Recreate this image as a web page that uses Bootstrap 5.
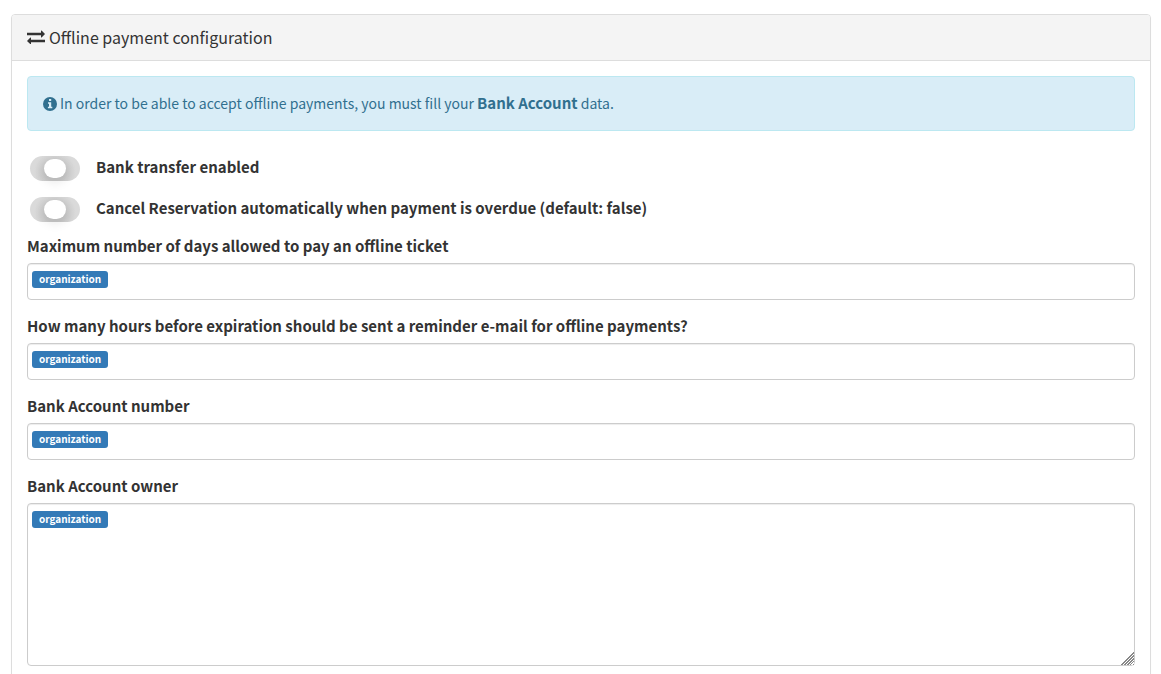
<!DOCTYPE html>
<html lang="en">
<head>
<meta charset="utf-8">
<meta name="viewport" content="width=device-width, initial-scale=1">
<title>Offline payment configuration</title>
<link href="https://cdn.jsdelivr.net/npm/bootstrap@5.3.0/dist/css/bootstrap.min.css" rel="stylesheet">
<style>
body{font-family:"Noto Sans CJK SC","Source Sans Pro",sans-serif;font-size:14px;line-height:22px;color:#333;background:#fff}
.page{padding:14px 10px 20px 11px}
.panel{border:1px solid #ddd;border-radius:4px;box-shadow:0 1px 1px rgba(0,0,0,.05)}
.panel-head{background:#f4f4f4;border-bottom:1px solid #ddd;border-radius:3px 3px 0 0;padding:11px 15px 12px}
.panel-head h1{font-size:16px;line-height:22px;font-weight:400;gap:4px}
.panel-main{padding:15px}
.notice{background:#d9edf7;border:1px solid #bce8f1;border-radius:4px;color:#31708f;padding:15px;line-height:23px;margin-bottom:17px;gap:3px}
.notice strong,.field-label,.switch-row label{font-size:15px;font-weight:700}
.notice strong{line-height:1}
.field-label,.switch-row label{line-height:22px}
.switches{margin-bottom:5px}
.switch-row{height:41px;gap:16px;padding-left:3px}
.switch-row label{padding-bottom:4px}
.toggle{width:50px;height:25px;appearance:none;border-radius:13px;margin:0;background:radial-gradient(circle at 25px 16px,#c8c8c8 10px,#dadada 21px);position:relative;flex:none}
.toggle::before{content:"";position:absolute;left:14px;top:3px;width:22px;height:19px;border-radius:11px;background:#fff;box-shadow:0 4px 11px rgba(0,0,0,.1)}
.field{margin-bottom:15px}
.field-label{display:block;margin-bottom:6px}
.box{position:relative}
.box .form-control{border:1px solid #ccc;border-radius:4px;font-size:14px;box-shadow:inset 0 1px 1px rgba(0,0,0,.075);padding:6px 12px 6px 88px;height:37px;display:block}
.box textarea.form-control{height:163px;resize:both}
textarea::-webkit-resizer{background:linear-gradient(135deg,#fff 55%,transparent 55%),repeating-linear-gradient(135deg,#888 0 1px,#fff 1px 2px)}
.tag{position:absolute;left:5px;top:8px;height:17px;line-height:16px;padding:0 7px;border-radius:3px;background:#337ab7;color:#fff;font-size:10px;font-weight:700}
</style>
</head>
<body>
<main class="page">
<section class="panel">
<header class="panel-head">
<h1 class="d-flex align-items-center m-0"><svg width="18" height="14" viewBox="0 0 18 14" fill="#333" aria-hidden="true"><path d="M0 2.8h14V1Q14 .2 14.6.6L18 4l-3.4 3.4Q14 7.8 14 7V5.3H0zM18 12.2H4V14q0 .6-.6.2L0 11l3.4-3.4Q4 7.2 4 8V9.7h14z"/></svg><span>Offline payment configuration</span></h1>
</header>
<form class="panel-main">
<div class="notice d-flex align-items-center" role="status"><svg width="14" height="14" viewBox="0 0 14 14" aria-hidden="true"><circle cx="7" cy="7" r="7" fill="#31708f"/><path d="M6 2h2.2v2H6zM5 5.2h3.2v4.6h1.1V11.3H4.9V9.8H6V6.7H5z" fill="#d9edf7"/></svg><span>In order to be able to accept offline payments, you must fill your <strong>Bank Account</strong> data.</span></div>
<div class="switches">
<div class="switch-row d-flex align-items-center"><input class="toggle" type="checkbox" role="switch" id="transfer"><label for="transfer">Bank transfer enabled</label></div>
<div class="switch-row d-flex align-items-center"><input class="toggle" type="checkbox" role="switch" id="cancel"><label for="cancel">Cancel Reservation automatically when payment is overdue (default: false)</label></div>
</div>
<div class="field"><label class="field-label" for="days">Maximum number of days allowed to pay an offline ticket</label><div class="box"><input class="form-control" id="days" type="text"><span class="tag">organization</span></div></div>
<div class="field"><label class="field-label" for="hours">How many hours before expiration should be sent a reminder e-mail for offline payments?</label><div class="box"><input class="form-control" id="hours" type="text"><span class="tag">organization</span></div></div>
<div class="field"><label class="field-label" for="number">Bank Account number</label><div class="box"><input class="form-control" id="number" type="text"><span class="tag">organization</span></div></div>
<div class="field"><label class="field-label" for="owner">Bank Account owner</label><div class="box"><textarea class="form-control" id="owner"></textarea><span class="tag">organization</span></div></div>
</form>
</section>
</main>
<script src="https://cdn.jsdelivr.net/npm/bootstrap@5.3.0/dist/js/bootstrap.bundle.min.js"></script>
</body>
</html>
